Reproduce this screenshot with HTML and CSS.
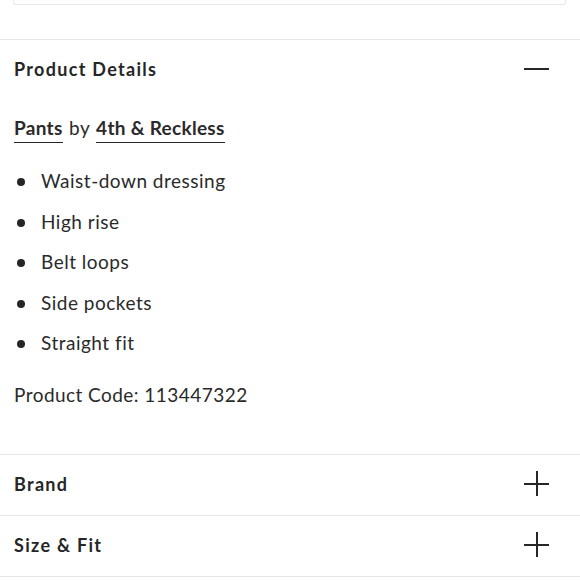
FILE: index.html
```html
<!DOCTYPE html>
<html>
<head>
<meta charset="utf-8">
<link rel="stylesheet" href="styles.css">
</head>
<body>
<div class="prev-card"></div>
<section class="acc acc-open">
  <div class="acc-head">
    <h2 class="acc-title">Product Details</h2>
    <span class="icon icon-minus"></span>
  </div>
  <div class="acc-body">
    <p class="byline"><a class="link">Pants</a> by <a class="link">4th &amp; Reckless</a></p>
    <ul class="features">
      <li>Waist-down dressing</li>
      <li>High rise</li>
      <li>Belt loops</li>
      <li>Side pockets</li>
      <li>Straight fit</li>
    </ul>
    <p class="code">Product Code: 113447322</p>
  </div>
</section>
<section class="acc">
  <div class="acc-head">
    <h2 class="acc-title">Brand</h2>
    <span class="icon icon-plus"></span>
  </div>
</section>
<section class="acc">
  <div class="acc-head">
    <h2 class="acc-title">Size &amp; Fit</h2>
    <span class="icon icon-plus"></span>
  </div>
</section>
</body>
</html>
```
FILE: styles.css
```css
html, body {
  margin: 0;
  padding: 0;
  background: #fff;
}
body {
  font-family: Lato, "Open Sans", sans-serif;
  color: #2a2a2a;
  width: 580px;
}
.prev-card {
  height: 4px;
  margin: 0 14px 0 13px;
  border: 1px solid #e8e8e8;
  border-top: none;
  border-radius: 0 0 3px 3px;
}
.acc {
  border-top: 1px solid #e6e6e6;
}
.prev-card + .acc {
  margin-top: 34px;
}
.acc:last-child {
  border-bottom: 1px solid #e6e6e6;
}
.acc-head {
  display: flex;
  align-items: center;
  justify-content: space-between;
  height: 58px;
  padding: 0 31px 2px 14px;
}
.acc-title {
  margin: 0;
  font-size: 18px;
  font-weight: 700;
  letter-spacing: 1.3px;
  color: #262626;
}
.icon {
  position: relative;
  width: 25px;
  height: 25px;
  display: block;
}
.icon::before,
.icon::after {
  content: "";
  position: absolute;
  background: #262626;
}
.icon-minus::before {
  left: 0;
  right: 0;
  top: 11px;
  height: 2.5px;
}
.icon-minus::after {
  display: none;
}
.icon-plus::before {
  left: 0;
  right: 0;
  top: 11.5px;
  height: 2px;
}
.icon-plus::after {
  top: 0;
  bottom: 0;
  left: 11.5px;
  width: 2px;
}
.acc-body {
  padding: 14px 14px 45px;
}
.byline {
  margin: 0;
  font-size: 19px;
  line-height: 28px;
  letter-spacing: 0.5px;
  word-spacing: 1px;
}
.link {
  font-weight: 700;
  letter-spacing: 0.3px;
  word-spacing: 0;
  padding-bottom: 3px;
  border-bottom: 1.5px solid #262626;
}
.features {
  list-style: none;
  margin: 19px 0 0;
  padding: 0;
}
.features li {
  position: relative;
  font-size: 19px;
  line-height: 40.5px;
  padding-left: 27px;
  letter-spacing: 0.5px;
}
.features li::before {
  content: "";
  position: absolute;
  left: 3px;
  top: 17px;
  width: 8px;
  height: 8px;
  border-radius: 50%;
  background: #262626;
}
.code {
  margin: 17px 0 0;
  font-size: 19px;
  line-height: 28px;
  letter-spacing: 0.45px;
}
```
